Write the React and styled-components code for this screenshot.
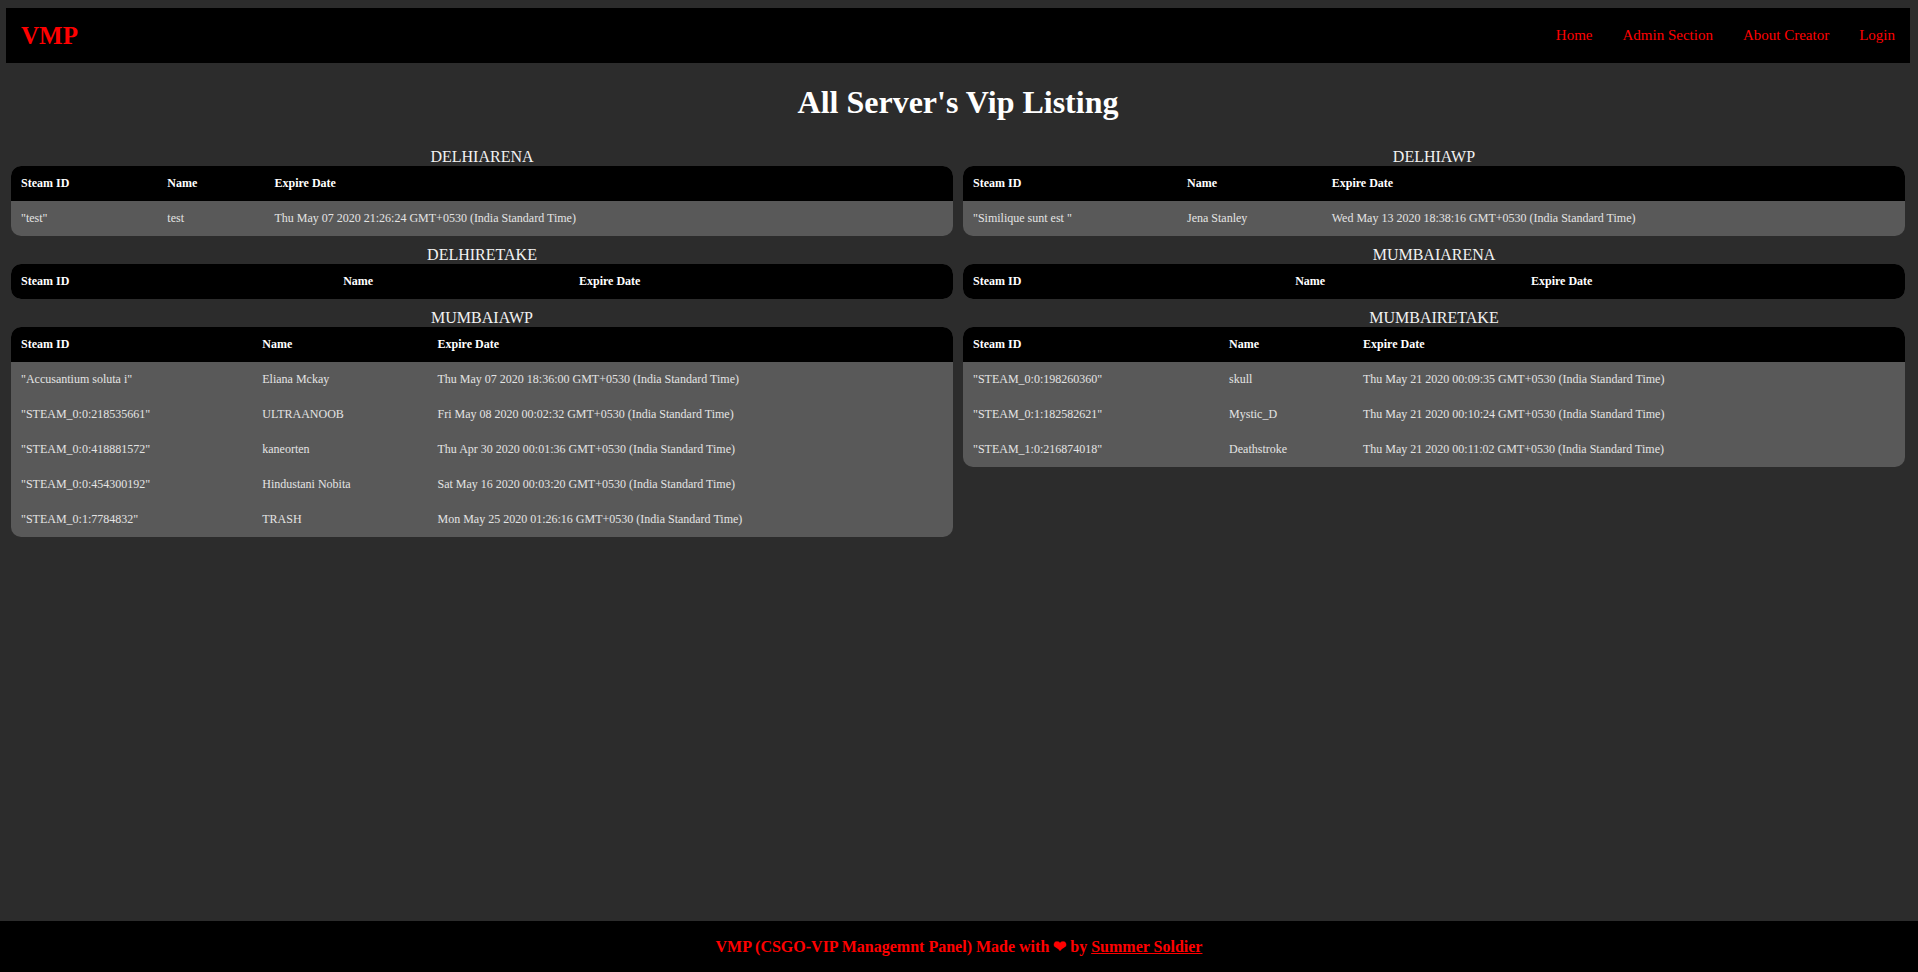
import React from 'react'
import styled, { createGlobalStyle } from 'styled-components';

const GlobalStyle = createGlobalStyle`
    html, body {
        margin : 0;
        padding : 0;
        background : #2c2c2c;
        font-family : "Liberation Serif", "Times New Roman", serif;
    }
`;

const Page = styled.div`
    display : flex;
    flex-direction : column;
    min-height : 100vh;
`;

const Navbar = styled.nav`
    display : flex;
    align-items : center;
    justify-content : space-between;
    height : 55px;
    margin : 8px 8px 0 6px;
    padding-left : 15px;
    background : #000;
`;

const Brand = styled.a`
    color : #ff0000;
    font-size : 25px;
    font-weight : bold;
    text-decoration : none;
`;

const NavLinks = styled.div`
    display : flex;
`;

const NavLink = styled.a`
    color : #ff0000;
    font-size : 15px;
    padding : 0 15px;
    text-decoration : none;
`;

const Main = styled.main`
    flex : 1;
    margin : 0 8px 0 6px;
`;

const Heading = styled.h1`
    margin : 21px 0 22px;
    color : #fff;
    font-size : 32px;
    line-height : 37px;
    text-align : center;
`;

const ServerGrid = styled.div`
    display : grid;
    grid-template-columns : 1fr 1fr;
    align-items : start;
`;

const ServerBlock = styled.section`
    padding : 5px;
    min-width : 0;
`;

const ServerTitle = styled.div`
    color : #f2f2f2;
    font-size : 16px;
    line-height : 18px;
    text-align : center;
`;

const TableWrap = styled.div`
    border-radius : 10px;
    overflow : hidden;
    background : #595959;
`;

const Table = styled.table`
    width : 100%;
    border-collapse : collapse;
    font-size : 12px;
`;

const HeadCell = styled.th`
    height : 35px;
    padding : 0 10px;
    background : #000;
    color : #fff;
    font-weight : bold;
    text-align : left;
`;

const Cell = styled.td`
    height : 35px;
    padding : 0 10px;
    color : #e4e4e4;
    text-align : left;
`;

const Footer = styled.footer`
    display : flex;
    align-items : center;
    justify-content : center;
    height : 51px;
    background : #000;
    color : #ff0000;
    font-size : 16px;
    font-weight : bold;
    white-space : pre;
`;

const FooterLink = styled.a`
    color : #ff0000;
    text-decoration : underline;
`;

const servers = [
    { name : 'DELHIARENA', vips : [
        ['"test"', 'test', 'Thu May 07 2020 21:26:24 GMT+0530 (India Standard Time)'],
    ]},
    { name : 'DELHIAWP', vips : [
        ['"Similique sunt est "', 'Jena Stanley', 'Wed May 13 2020 18:38:16 GMT+0530 (India Standard Time)'],
    ]},
    { name : 'DELHIRETAKE', vips : [] },
    { name : 'MUMBAIARENA', vips : [] },
    { name : 'MUMBAIAWP', vips : [
        ['"Accusantium soluta i"', 'Eliana Mckay', 'Thu May 07 2020 18:36:00 GMT+0530 (India Standard Time)'],
        ['"STEAM_0:0:218535661"', 'ULTRAANOOB', 'Fri May 08 2020 00:02:32 GMT+0530 (India Standard Time)'],
        ['"STEAM_0:0:418881572"', 'kaneorten', 'Thu Apr 30 2020 00:01:36 GMT+0530 (India Standard Time)'],
        ['"STEAM_0:0:454300192"', 'Hindustani Nobita', 'Sat May 16 2020 00:03:20 GMT+0530 (India Standard Time)'],
        ['"STEAM_0:1:7784832"', 'TRASH', 'Mon May 25 2020 01:26:16 GMT+0530 (India Standard Time)'],
    ]},
    { name : 'MUMBAIRETAKE', vips : [
        ['"STEAM_0:0:198260360"', 'skull', 'Thu May 21 2020 00:09:35 GMT+0530 (India Standard Time)'],
        ['"STEAM_0:1:182582621"', 'Mystic_D', 'Thu May 21 2020 00:10:24 GMT+0530 (India Standard Time)'],
        ['"STEAM_1:0:216874018"', 'Deathstroke', 'Thu May 21 2020 00:11:02 GMT+0530 (India Standard Time)'],
    ]},
];

const VipTable = ({name, vips}) => (
    <ServerBlock>
        <ServerTitle>{name}</ServerTitle>
        <TableWrap>
            <Table>
                <thead>
                    <tr>
                        <HeadCell>Steam ID</HeadCell>
                        <HeadCell>Name</HeadCell>
                        <HeadCell>Expire Date</HeadCell>
                    </tr>
                </thead>
                <tbody>
                    {vips.map(v => (
                        <tr key={v[0]}>
                            <Cell>{v[0]}</Cell>
                            <Cell>{v[1]}</Cell>
                            <Cell>{v[2]}</Cell>
                        </tr>
                    ))}
                </tbody>
            </Table>
        </TableWrap>
    </ServerBlock>
);

const App = () => {
    return (
        <Page>
            <GlobalStyle />
            <Navbar>
                <Brand href="#">VMP</Brand>
                <NavLinks>
                    <NavLink href="#">Home</NavLink>
                    <NavLink href="#">Admin Section</NavLink>
                    <NavLink href="#">About Creator</NavLink>
                    <NavLink href="#">Login</NavLink>
                </NavLinks>
            </Navbar>
            <Main>
                <Heading>All Server's Vip Listing</Heading>
                <ServerGrid>
                    {servers.map(s => <VipTable key={s.name} name={s.name} vips={s.vips} />)}
                </ServerGrid>
            </Main>
            <Footer>
                {'VMP (CSGO-VIP Managemnt Panel) Made with ❤ by '}<FooterLink href="#">Summer Soldier</FooterLink>
            </Footer>
        </Page>
    )
}

export default App
